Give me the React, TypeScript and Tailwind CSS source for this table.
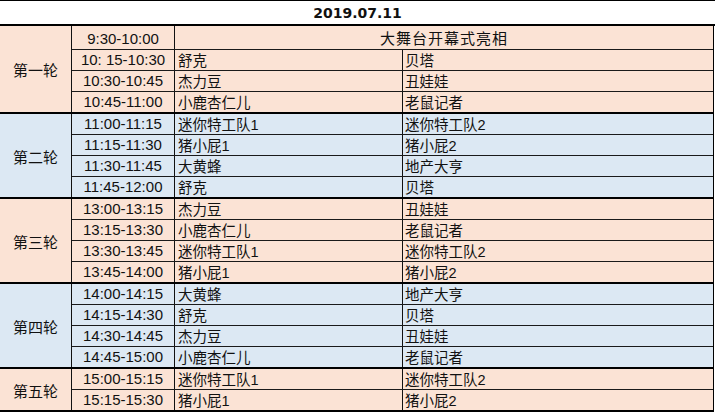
import React from "react";

type Row = { time: string; a?: string; b?: string; merged?: string };
type Round = { label: string; bg: string; rows: Row[] };

const rounds: Round[] = [
  {
    label: "第一轮",
    bg: "bg-[#fbe3d5]",
    rows: [
      { time: "9:30-10:00", merged: "大舞台开幕式亮相" },
      { time: "10: 15-10:30", a: "舒克", b: "贝塔" },
      { time: "10:30-10:45", a: "杰力豆", b: "丑娃娃" },
      { time: "10:45-11:00", a: "小鹿杏仁儿", b: "老鼠记者" },
    ],
  },
  {
    label: "第二轮",
    bg: "bg-[#dce8f3]",
    rows: [
      { time: "11:00-11:15", a: "迷你特工队1", b: "迷你特工队2" },
      { time: "11:15-11:30", a: "猪小屁1", b: "猪小屁2" },
      { time: "11:30-11:45", a: "大黄蜂", b: "地产大亨" },
      { time: "11:45-12:00", a: "舒克", b: "贝塔" },
    ],
  },
  {
    label: "第三轮",
    bg: "bg-[#fbe3d5]",
    rows: [
      { time: "13:00-13:15", a: "杰力豆", b: "丑娃娃" },
      { time: "13:15-13:30", a: "小鹿杏仁儿", b: "老鼠记者" },
      { time: "13:30-13:45", a: "迷你特工队1", b: "迷你特工队2" },
      { time: "13:45-14:00", a: "猪小屁1", b: "猪小屁2" },
    ],
  },
  {
    label: "第四轮",
    bg: "bg-[#dce8f3]",
    rows: [
      { time: "14:00-14:15", a: "大黄蜂", b: "地产大亨" },
      { time: "14:15-14:30", a: "舒克", b: "贝塔" },
      { time: "14:30-14:45", a: "杰力豆", b: "丑娃娃" },
      { time: "14:45-15:00", a: "小鹿杏仁儿", b: "老鼠记者" },
    ],
  },
  {
    label: "第五轮",
    bg: "bg-[#fbe3d5]",
    rows: [
      { time: "15:00-15:15", a: "迷你特工队1", b: "迷你特工队2" },
      { time: "15:15-15:30", a: "猪小屁1", b: "猪小屁2" },
    ],
  },
];

const cjk = "font-['Liberation_Sans','Noto_Sans_CJK_SC',sans-serif]";

function DataRow({ row, first }: { row: Row; first: boolean }) {
  const h = row.merged ? "h-[23px]" : first ? "h-[20px]" : "h-[21px]";
  return (
    <div className={`flex ${h} ${first ? "" : "border-t border-[#1a1a1a]"}`}>
      <div className="w-[103px] shrink-0 border-r border-[#111] flex items-end justify-center pb-[2px] text-[15px] leading-[16px] text-[#111] whitespace-nowrap font-['Liberation_Sans',sans-serif]">
        {row.time}
      </div>
      {row.merged ? (
        <div className={`flex-1 flex items-end justify-center pb-[1px] text-[15px] leading-[18px] tracking-[1px] text-[#111] ${cjk}`}>
          {row.merged}
        </div>
      ) : (
        <>
          <div className={`w-[228px] shrink-0 border-r border-[#111] flex items-end pl-[3px] text-[14.5px] leading-[17px] text-[#111] whitespace-nowrap ${cjk}`}>
            {row.a}
          </div>
          <div className={`flex-1 flex items-end pl-[2px] text-[14.5px] leading-[17px] text-[#111] whitespace-nowrap ${cjk}`}>
            {row.b}
          </div>
        </>
      )}
    </div>
  );
}

export default function App() {
  return (
    <div className="w-[715px] h-[415px] bg-white overflow-hidden">
      <div className="h-[26px] border-t border-b-2 border-black flex items-center justify-center pt-[1px] text-[14px] font-bold text-[#111] font-['DejaVu_Sans',sans-serif]">
        2019.07.11
      </div>
      <div className="w-[714px] border-r border-black">
        {rounds.map((r) => (
          <div key={r.label} className={`flex border-b-2 border-black ${r.bg}`}>
            <div className={`w-[72px] shrink-0 border-r border-[#111] flex items-center justify-center pt-[5px] text-[15px] text-[#111] ${cjk}`}>
              {r.label}
            </div>
            <div className="flex-1 flex flex-col">
              {r.rows.map((row, i) => (
                <DataRow key={row.time} row={row} first={i === 0} />
              ))}
            </div>
          </div>
        ))}
      </div>
    </div>
  );
}
